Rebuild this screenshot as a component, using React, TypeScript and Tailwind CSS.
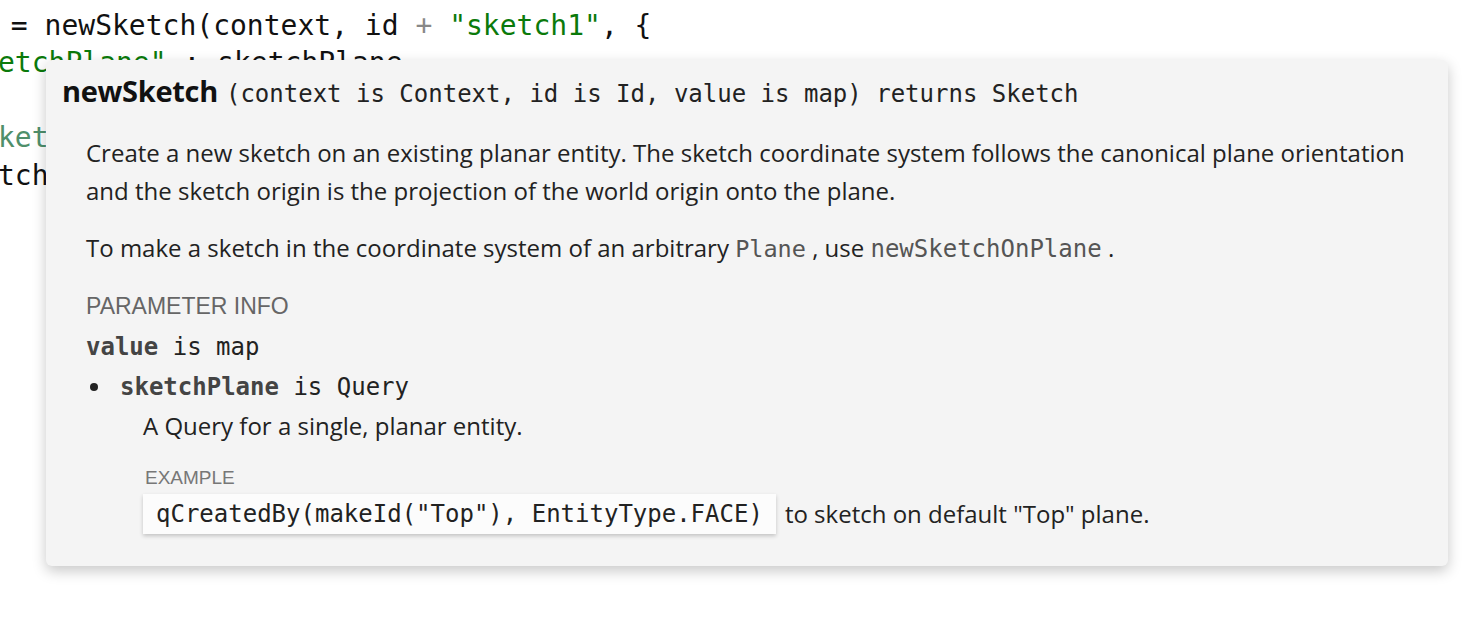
import React from "react";

const mono = "font-['DejaVu_Sans_Mono','Liberation_Mono',monospace]";
const sans = "font-['Open_Sans','Noto_Sans',sans-serif]";
const arial = "font-['Liberation_Sans',Arial,sans-serif]";

export default function App() {
  return (
    <div className="relative w-[1470px] h-[624px] bg-white overflow-hidden">
      {/* background code editor */}
      <div className={`${mono} text-[28px] leading-[37.4px] text-[#111] pt-[7px] whitespace-pre`}>
        <div className="-ml-[6px]">
          <span> = newSketch(context, id </span>
          <span className="text-[#888]">+</span>
          <span> </span>
          <span className="text-[#0b7a0b]">"sketch1"</span>
          <span>, {"{"}</span>
        </div>
        <div className="-ml-[2px]">
          <span className="text-[#0b7a0b]">etchPlane"</span>
          <span> : sketchPlane</span>
        </div>
        <div>&nbsp;</div>
        <div className="-ml-[2px]">
          <span className="text-[#4f8f6b]">ketchName</span>
        </div>
        <div className="-ml-[2px]">
          <span>tch</span>
        </div>
      </div>

      {/* tooltip */}
      <div className="absolute left-[46px] top-[60px] w-[1402px] h-[506px] rounded-[6px] bg-[#f4f4f4] shadow-[0_5px_14px_rgba(0,0,0,0.22)] pl-[16px] pr-[20px] pt-[13px]">
        <div className="flex items-baseline leading-[36px] whitespace-pre">
          <span className={`${sans} font-bold text-[29px] text-[#111] tracking-[-0.3px]`}>newSketch</span>
          <span className={`${mono} ml-[8px] text-[24px] text-[#222]`}>(context is Context, id is Id, value is map) returns Sketch</span>
        </div>

        <div className={`pl-[24px] ${sans} text-[24px] text-[#222]`}>
          <p className="mt-[22px] leading-[38px]">
            Create a new sketch on an existing planar entity. The sketch coordinate system follows the canonical plane orientation and the sketch origin is the projection of the world origin onto the plane.
          </p>
          <p className="mt-[19px] leading-[38px]">
            To make a sketch in the coordinate system of an arbitrary{" "}
            <span className={`${mono} text-[23.5px] text-[#555]`}>Plane</span> , use{" "}
            <span className={`${mono} text-[24px] text-[#555]`}>newSketchOnPlane</span> .
          </p>

          <div className={`${arial} mt-[24px] text-[23px] leading-[28px] text-[#666]`}>PARAMETER INFO</div>

          <div className={`${mono} mt-[7px] text-[24px] leading-[40px] text-[#222] whitespace-pre`}>
            <span className="font-bold text-[#444]">value</span> is map
          </div>

          <div className="flex items-center h-[40px]">
            <div className="w-[8px] h-[8px] rounded-full bg-[#222] ml-[4px] mr-[22px]" />
            <div className={`${mono} text-[24px] leading-[40px] text-[#222] whitespace-pre`}>
              <span className="font-bold text-[#444]">sketchPlane</span> is Query
            </div>
          </div>

          <div className="pl-[57px]">
            <p className="leading-[38px]">A Query for a single, planar entity.</p>
            <div className={`${arial} mt-[21px] ml-[2px] text-[19px] leading-[24px] text-[#777]`}>EXAMPLE</div>
            <div className="mt-[4px] flex items-center">
              <div className={`${mono} text-[24px] leading-[40px] h-[40px] px-[13px] bg-[#fcfcfc] text-[#222] shadow-[0_2px_4px_rgba(0,0,0,0.2)] whitespace-pre`}>
                qCreatedBy(makeId("Top"), EntityType.FACE)
              </div>
              <span className="ml-[9px] leading-[40px]">to sketch on default "Top" plane.</span>
            </div>
          </div>
        </div>
      </div>
    </div>
  );
}
